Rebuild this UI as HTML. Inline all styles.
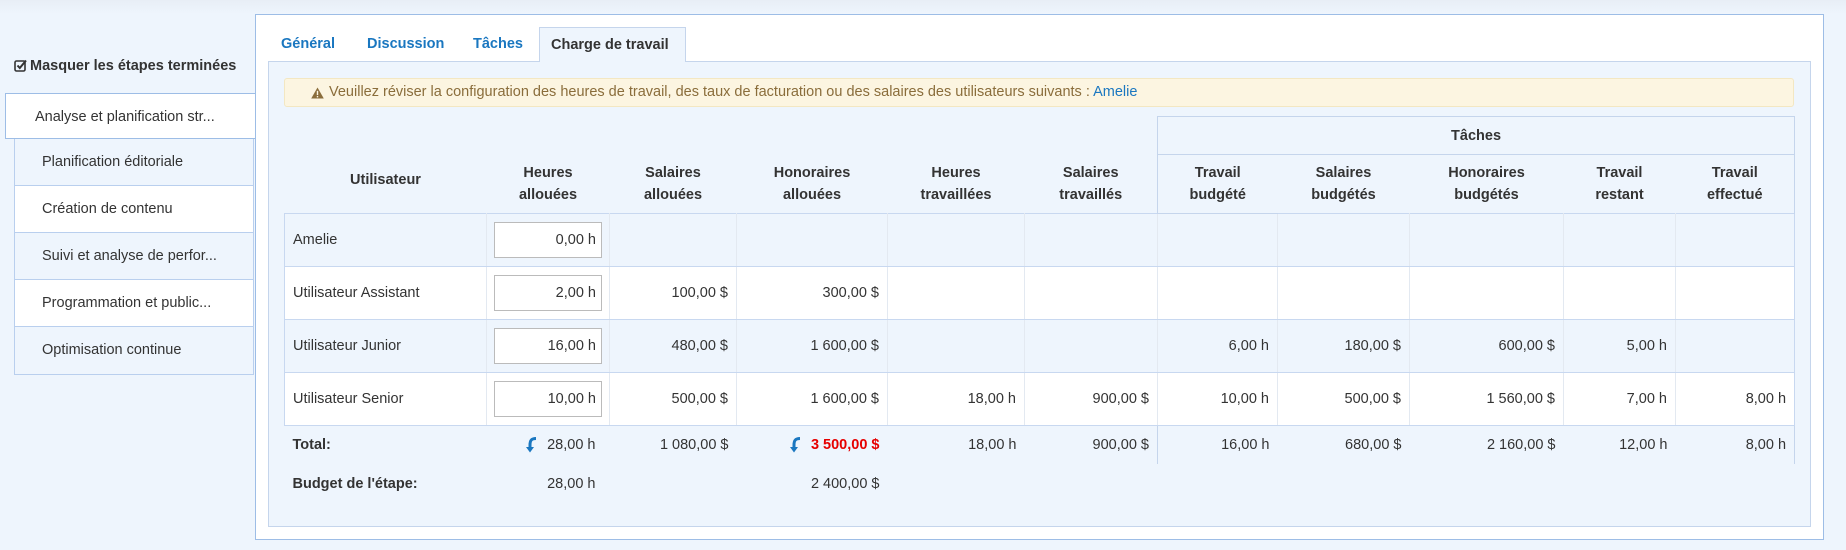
<!DOCTYPE html>
<html><head><meta charset="utf-8">
<style>
*{box-sizing:border-box;margin:0;padding:0}
body{width:1846px;height:550px;overflow:hidden;background:#eef5fd;font-family:"Liberation Sans",Arial,sans-serif;color:#333;font-size:14px;position:relative}
.top{position:absolute;left:0;top:0;width:1846px;height:14px;background:linear-gradient(#e8eef6,#eef5fd)}
.chk{position:absolute;left:14px;top:58px;font-weight:bold;font-size:14.5px;color:#333}
.chk svg{vertical-align:-2px;margin-right:3px}
.side{position:absolute;left:14px;width:240px;height:47px;border:1px solid #b9cfee;border-top:none;background:#eef5fd;font-size:14.5px;line-height:46px;padding-left:27px;color:#333}
.side.w{background:#fff}
.side.act{left:5px;width:250px;top:93px;height:46px;border:1px solid #9dbde6;border-right:none;background:#fff;padding-left:29px}
.panel{position:absolute;left:255px;top:14px;width:1569px;height:526px;border:1px solid #9dbde6;background:#fff}
.tab{position:absolute;top:30px;font-weight:bold;font-size:14.5px;color:#1a77c0}
.tabact{position:absolute;left:539px;top:27px;width:147px;height:35px;border:1px solid #c5d5ec;border-bottom:none;background:#eef5fd;z-index:2;color:#333;font-weight:bold;font-size:14.5px;padding:9px 0 0 11px}
.content{position:absolute;left:268px;top:61px;width:1543px;height:466px;border:1px solid #c5d5ec;background:#eef5fd}
.warn{position:absolute;left:284px;top:78px;width:1510px;height:29px;background:#fcf5e1;border:1px solid #f3e7c2;border-radius:3px;color:#8a6d3b;font-size:14.5px;padding:5px 0 0 25px}
.warn a{color:#1a77c0}
table{position:absolute;left:284px;top:116px;border-collapse:collapse;table-layout:fixed;width:1510px;font-size:14.5px}
th{font-weight:bold;color:#333;text-align:center;line-height:22px;vertical-align:middle}
td{text-align:right;padding-right:8px;vertical-align:middle;border-left:1px solid #e3e9f1;border-right:1px solid #e3e9f1}
tr.b td{height:53px;border-top:1px solid #c8d8f0;border-bottom:1px solid #c8d8f0}
tr.b td:first-child{text-align:left;padding-left:8px;border-left:1px solid #c8d8f0}
tr.b td:last-child{border-right:1px solid #c8d8f0}
tr.lb td{background:#eef5fd}
tr.wb td{background:#fff}
.inp{display:inline-block;width:108px;height:36px;border:1px solid #bbb;background:#fff;text-align:right;padding:9px 5px 0 0;color:#333}
td.ic{padding-right:7px}
.g{border:1px solid #c5d5ec}
tr.t td{height:38px;border:none;padding-top:0}
tr.t td.bl{border-left:1px solid #c5d5ec}
tr.t td.br{border-right:1px solid #c5d5ec}
tr.t td:first-child,tr.bu td:first-child{text-align:left;padding-left:8px;font-weight:bold}
tr.bu td{height:40px;border:none}
.red{color:#e60000;font-weight:bold}
.arr{vertical-align:-4px;margin-right:10px}
</style></head><body>
<div class="top"></div>
<div class="chk"><svg width="13" height="13" viewBox="0 0 13 13"><rect x="1" y="2" width="10" height="10" rx="1.5" fill="none" stroke="#333" stroke-width="1.6"/><path d="M3.5 6.5l2.3 2.5L12 1.5" fill="none" stroke="#333" stroke-width="2"/></svg>Masquer les étapes terminées</div>
<div class="side act">Analyse et planification str...</div>
<div class="side" style="top:139px">Planification éditoriale</div>
<div class="side w" style="top:186px">Création de contenu</div>
<div class="side" style="top:233px">Suivi et analyse de perfor...</div>
<div class="side w" style="top:280px">Programmation et public...</div>
<div class="side" style="top:327px;height:48px">Optimisation continue</div>
<div class="panel"></div>
<div class="tab" style="left:281px;top:36px">Général</div>
<div class="tab" style="left:367px;top:36px">Discussion</div>
<div class="tab" style="left:473px;top:36px">Tâches</div>
<div class="tabact">Charge de travail</div>
<div class="content"></div>
<div class="warn"><svg width="13" height="12" viewBox="0 0 13 12" style="position:absolute;left:26px;top:8px"><path d="M6.5 0.5L12.8 11.5H0.2Z" fill="#8a6d3b"/><rect x="5.8" y="3.8" width="1.4" height="4.3" fill="#fcf5e1"/><rect x="5.8" y="9" width="1.4" height="1.4" fill="#fcf5e1"/></svg><span style="padding-left:19px">Veuillez réviser la configuration des heures de travail, des taux de facturation ou des salaires des utilisateurs suivants : <a>Amelie</a></span></div>
<table>
<colgroup><col style="width:202px"><col style="width:123px"><col style="width:127px"><col style="width:151px"><col style="width:137px"><col style="width:133px"><col style="width:120px"><col style="width:132px"><col style="width:154px"><col style="width:112px"><col style="width:119px"></colgroup>
<tr style="height:38px"><th rowspan="2" style="padding-top:30px">Utilisateur</th><th rowspan="2" style="padding-top:38px">Heures<br>allouées</th><th rowspan="2" style="padding-top:38px">Salaires<br>allouées</th><th rowspan="2" style="padding-top:38px">Honoraires<br>allouées</th><th rowspan="2" style="padding-top:38px">Heures<br>travaillées</th><th rowspan="2" style="padding-top:38px">Salaires<br>travaillés</th><th colspan="5" class="g">Tâches</th></tr>
<tr style="height:59px"><th class="g" style="border-right:none">Travail<br>budgété</th><th style="border-top:1px solid #c5d5ec">Salaires<br>budgétés</th><th style="border-top:1px solid #c5d5ec">Honoraires<br>budgétés</th><th style="border-top:1px solid #c5d5ec">Travail<br>restant</th><th style="border-top:1px solid #c5d5ec;border-right:1px solid #c5d5ec">Travail<br>effectué</th></tr>
<tr class="b lb"><td>Amelie</td><td class="ic"><span class="inp">0,00 h</span></td><td></td><td></td><td></td><td></td><td></td><td></td><td></td><td></td><td></td></tr>
<tr class="b wb"><td>Utilisateur Assistant</td><td class="ic"><span class="inp">2,00 h</span></td><td>100,00 $</td><td>300,00 $</td><td></td><td></td><td></td><td></td><td></td><td></td><td></td></tr>
<tr class="b lb"><td>Utilisateur Junior</td><td class="ic"><span class="inp">16,00 h</span></td><td>480,00 $</td><td>1 600,00 $</td><td></td><td></td><td>6,00 h</td><td>180,00 $</td><td>600,00 $</td><td>5,00 h</td><td></td></tr>
<tr class="b wb"><td>Utilisateur Senior</td><td class="ic"><span class="inp">10,00 h</span></td><td>500,00 $</td><td>1 600,00 $</td><td>18,00 h</td><td>900,00 $</td><td>10,00 h</td><td>500,00 $</td><td>1 560,00 $</td><td>7,00 h</td><td>8,00 h</td></tr>
<tr class="t"><td>Total:</td><td style="padding-right:14px"><svg class="arr" width="12" height="16" viewBox="0 0 12 16"><path d="M11 1.5C6 1.5 5 4 5 8v3" fill="none" stroke="#1a77c0" stroke-width="3"/><path d="M1 10h8l-4 5.5z" fill="#1a77c0"/></svg>28,00 h</td><td>1 080,00 $</td><td><svg class="arr" width="12" height="16" viewBox="0 0 12 16"><path d="M11 1.5C6 1.5 5 4 5 8v3" fill="none" stroke="#1a77c0" stroke-width="3"/><path d="M1 10h8l-4 5.5z" fill="#1a77c0"/></svg><span class="red">3 500,00 $</span></td><td>18,00 h</td><td>900,00 $</td><td class="bl">16,00 h</td><td>680,00 $</td><td>2 160,00 $</td><td>12,00 h</td><td class="br">8,00 h</td></tr>
<tr class="bu"><td>Budget de l'étape:</td><td style="padding-right:14px">28,00 h</td><td></td><td>2 400,00 $</td><td></td><td></td><td></td><td></td><td></td><td></td><td></td></tr>
</table>
</body></html>
